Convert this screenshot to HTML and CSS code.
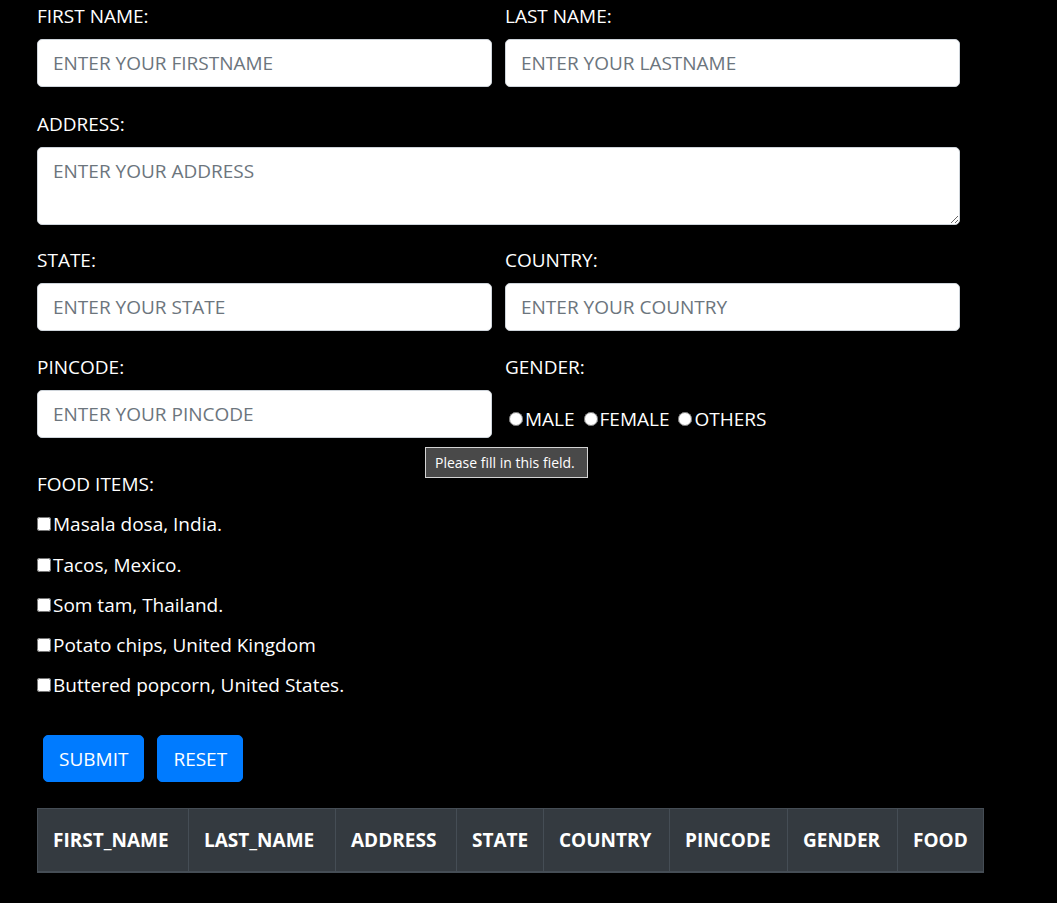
FILE: index.html
```html
<!DOCTYPE html>
<html lang="en">
<head>
<meta charset="utf-8">
<title>Form</title>
<link rel="stylesheet" href="styles.css">
</head>
<body>
<div class="page">
  <form class="form">
    <div class="row2">
      <div class="field">
        <label class="lbl">FIRST NAME:</label>
        <input class="control" type="text" placeholder="ENTER YOUR FIRSTNAME">
      </div>
      <div class="field">
        <label class="lbl">LAST NAME:</label>
        <input class="control" type="text" placeholder="ENTER YOUR LASTNAME">
      </div>
    </div>
    <div class="field field-address">
      <label class="lbl">ADDRESS:</label>
      <textarea class="control area" rows="2" placeholder="ENTER YOUR ADDRESS"></textarea>
    </div>
    <div class="row2">
      <div class="field">
        <label class="lbl">STATE:</label>
        <input class="control" type="text" placeholder="ENTER YOUR STATE">
      </div>
      <div class="field">
        <label class="lbl">COUNTRY:</label>
        <input class="control" type="text" placeholder="ENTER YOUR COUNTRY">
      </div>
    </div>
    <div class="row2 row-last">
      <div class="field">
        <label class="lbl">PINCODE:</label>
        <input class="control" type="text" placeholder="ENTER YOUR PINCODE">
      </div>
      <div class="field">
        <label class="lbl">GENDER:</label>
        <div class="radios"><input type="radio" name="g" class="radio">MALE <input type="radio" name="g" class="radio">FEMALE <input type="radio" name="g" class="radio">OTHERS</div>
      </div>
    </div>
    <div class="food">
      <label class="lbl">FOOD ITEMS:</label>
      <div class="check check-first"><input type="checkbox" class="cb">Masala dosa, India.</div>
      <div class="check"><input type="checkbox" class="cb">Tacos, Mexico.</div>
      <div class="check"><input type="checkbox" class="cb">Som tam, Thailand.</div>
      <div class="check"><input type="checkbox" class="cb">Potato chips, United Kingdom</div>
      <div class="check"><input type="checkbox" class="cb">Buttered popcorn, United States.</div>
    </div>
    <div class="buttons">
      <button type="button" class="btn">SUBMIT</button>
      <button type="button" class="btn">RESET</button>
    </div>
  </form>
  <table class="tbl">
    <thead>
      <tr>
        <th class="c1">FIRST_NAME</th>
        <th class="c2">LAST_NAME</th>
        <th class="c3">ADDRESS</th>
        <th class="c4">STATE</th>
        <th class="c5">COUNTRY</th>
        <th class="c6">PINCODE</th>
        <th class="c7">GENDER</th>
        <th class="c8">FOOD</th>
      </tr>
    </thead>
  </table>
  <div class="tooltip">Please fill in this field.</div>
</div>
</body>
</html>
```
FILE: styles.css
```css
* { box-sizing: border-box; }
html, body {
  margin: 0;
  padding: 0;
  background: #000;
}
body {
  font-family: "Segoe UI", "Open Sans", "Noto Sans", sans-serif;
  font-size: 19px;
  line-height: 30px;
  color: #fff;
  height: 903px;
  overflow: hidden;
}
.page {
  position: relative;
  padding: 1px 0 0 37px;
  width: 960px;
}
.row2 {
  display: grid;
  grid-template-columns: 455px 455px;
  column-gap: 13px;
}
.field {
  margin-bottom: 21px;
}
.field-address {
  margin-top: 1px;
  margin-bottom: 20px;
}
.row-last .field { margin-bottom: 0; }
.row-last { margin-bottom: 31px; }
.lbl {
  display: block;
  margin-bottom: 8px;
  line-height: 30px;
}
.control {
  display: block;
  width: 100%;
  height: 48px;
  padding: 8px 15px;
  font-family: inherit;
  font-size: 19px;
  line-height: 30px;
  color: #495057;
  background: #fff;
  border: 1px solid #ced4da;
  border-radius: 5px;
  outline: none;
}
.control::placeholder { color: #6c757d; }
.area {
  height: 78px;
  resize: vertical;
}
.radios {
  margin-top: 22px;
  line-height: 30px;
}
.radio {
  width: 14px;
  height: 14px;
  margin: 3px 2px 0 4px;
}
.food .lbl { margin-bottom: 10px; }
.check {
  line-height: 30px;
  margin-bottom: 10px;
}
.check-first { margin-bottom: 11px; }
.cb {
  width: 14px;
  height: 14px;
  margin: 3px 2px 3px 0;
}
.buttons {
  display: flex;
  gap: 13px;
  padding-left: 6px;
  margin-top: 35px;
  margin-bottom: 26px;
}
.btn {
  font-family: inherit;
  font-size: 19px;
  line-height: 30px;
  height: 47px;
  padding: 8px 15px;
  color: #fff;
  background: #007bff;
  border: 1px solid #007bff;
  border-radius: 5px;
}
.tbl {
  border-collapse: collapse;
  table-layout: fixed;
  width: 946px;
}
.tbl th {
  background: #343a40;
  color: #fff;
  border: 1px solid #454d55;
  border-bottom-width: 2px;
  font-weight: 700;
  font-size: 19px;
  line-height: 30px;
  padding: 15px 0 15px 15px;
  text-align: left;
  white-space: nowrap;
  height: 63px;
}
.c1 { width: 151px; }
.c2 { width: 147px; }
.c3 { width: 121px; }
.c4 { width: 87px; }
.c5 { width: 126px; }
.c6 { width: 118px; }
.c7 { width: 110px; }
.c8 { width: 86px; }
.tooltip {
  position: absolute;
  left: 425px;
  top: 447px;
  width: 163px;
  height: 31px;
  padding: 0 9px;
  background: #494949;
  border: 1px solid #d4d4d4;
  color: #fff;
  font-size: 14px;
  line-height: 29px;
  white-space: nowrap;
}
```
